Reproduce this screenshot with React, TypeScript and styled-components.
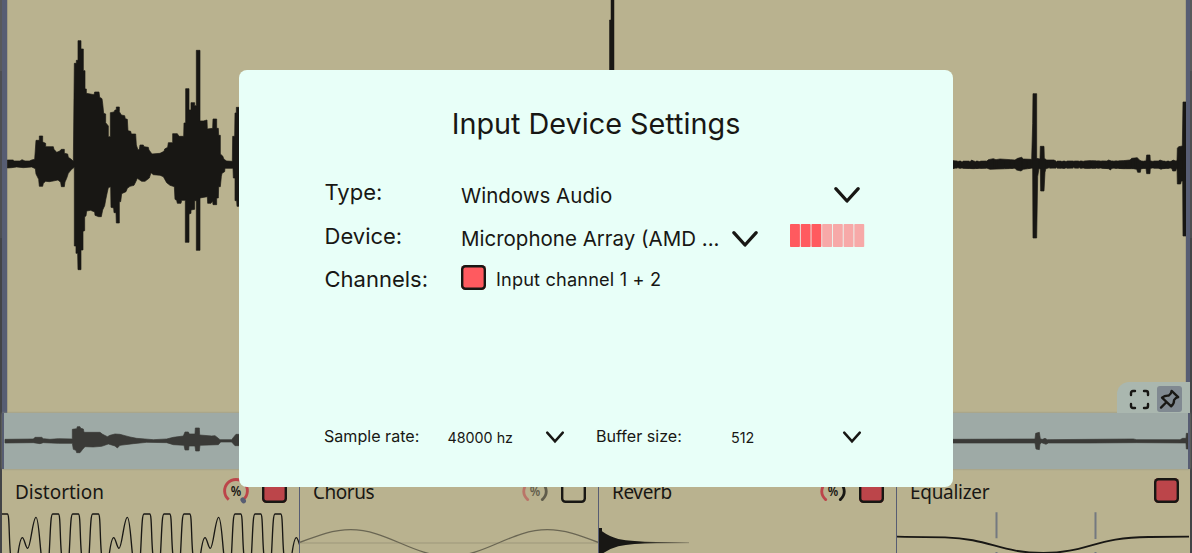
import React from 'react';
import styled, { createGlobalStyle } from 'styled-components';

const ink = '#181714';
const sand = '#b9b28f';
const steel = '#575d73';
const brick = '#bc454a';

const GlobalStyle = createGlobalStyle`
  *, *::before, *::after { box-sizing: border-box; }
  html, body { margin: 0; padding: 0; overflow: hidden; }
  body { background: #48484b; font-family: Inter, "Liberation Sans", sans-serif; color: ${ink}; }
  svg { display: block; flex: none; }
`;

const Workspace = styled.div`
  position: relative;
  display: flex;
  flex-direction: column;
  width: 1192px;
  height: 553px;
  padding: 0 2px;
  overflow: hidden;
  background: linear-gradient(#58595b 0 71px, #4d4e51 71px 238px, #434447 238px);
`;

const Editor = styled.section`
  flex: none;
  height: 413px;
  border-left: 5px solid ${steel};
  border-right: 4px solid ${steel};
  background: ${sand};
  box-shadow: inset 1px 0 0 #a19c84, inset -1px 0 0 #a8a287;
`;

const Overview = styled.section`
  flex: none;
  height: 56px;
  border-left: 2px solid ${steel};
  border-right: 2px solid ${steel};
  background: #9eaaa6;
  box-shadow: 0 0 2px #8c8f80;
  z-index: 1;
`;

const EffectRack = styled.section`
  display: grid;
  grid-template-columns: 298px 299px 298px 293px;
  height: 84px;
  background: ${sand};
`;

const EffectPanel = styled.article<{ $last?: boolean }>`
  display: flex;
  flex-direction: column;
  overflow: hidden;
  border-right: ${p => (p.$last ? '0' : `1px solid ${steel}`)};
`;

const EffectHeader = styled.header<{ $last?: boolean }>`
  display: flex;
  align-items: center;
  flex: none;
  height: 43px;
  padding: 0 ${p => (p.$last ? 11 : 12.5)}px 0 12.5px;
`;

const EffectName = styled.h2<{ $tracking: number }>`
  flex: 1;
  margin: 0;
  font: 400 20.5px/26px "Noto Sans", sans-serif;
  letter-spacing: ${p => p.$tracking}px;
  color: ${ink};
  transform: scaleX(0.925);
  transform-origin: left center;
`;

const Toggle = styled.span<{ $fill: string }>`
  flex: none;
  width: 25px;
  height: 25px;
  border-radius: 4.5px;
  background: ${p => p.$fill};
  box-shadow: inset 0 0 0 2.4px ${ink};
`;

const KnobSlot = styled.span<{ $dim?: boolean }>`
  margin-right: 11.5px;
  opacity: ${p => (p.$dim ? 0.55 : 1)};
`;

const ViewTools = styled.nav`
  position: absolute;
  top: 382px;
  right: 2px;
  display: flex;
  align-items: center;
  gap: 6px;
  width: 73px;
  height: 31px;
  padding: 3px 8px 0 11px;
  border-radius: 12px 0 0 0;
  background: #aab7af;
  z-index: 2;
`;

const ToolButton = styled.button<{ $active?: boolean }>`
  display: grid;
  place-items: center;
  width: ${p => (p.$active ? 25 : 23)}px;
  height: 26px;
  padding: 0;
  border: 0;
  border-radius: 3px;
  background: ${p => (p.$active ? '#808991' : 'transparent')};
`;

const Dialog = styled.div`
  position: absolute;
  top: 70px;
  left: 239px;
  display: flex;
  flex-direction: column;
  width: 714px;
  height: 417px;
  padding: 35px 85px 0;
  border-radius: 8px;
  background: #e8fff8;
  z-index: 3;
`;

const Title = styled.h1`
  margin: 0 0 31px;
  font-size: 28.8px;
  font-weight: 380;
  line-height: 37px;
  text-align: center;
  white-space: nowrap;
`;

const SettingRow = styled.div`
  display: flex;
  align-items: flex-start;
  height: 43.5px;
`;

const Label = styled.span`
  width: 137px;
  flex: none;
  padding-left: 0.5px;
  font-size: 22px;
  font-weight: 380;
  line-height: 38.6px;
`;

const Select = styled.div<{ $width: number }>`
  display: flex;
  align-items: center;
  justify-content: space-between;
  flex: none;
  width: ${p => p.$width}px;
  height: 44px;
  font-size: 20.5px;
  white-space: nowrap;
`;

const Channel = styled.div`
  display: flex;
  align-items: center;
  gap: 10px;
  height: 38px;
  font-size: 18.2px;
  letter-spacing: 0.15px;
`;

const ChannelToggle = styled(Toggle)`
  margin-top: -3px;
`;

const MeterSlot = styled.div`
  margin: 7.5px 0 0 31px;
`;

const Footer = styled.div`
  display: flex;
  align-items: center;
  margin-top: 117px;
  height: 30px;
`;

const FooterLabel = styled.span<{ $width: number }>`
  width: ${p => p.$width}px;
  font-size: 16.1px;
  white-space: nowrap;
`;

const FooterSelect = styled.div<{ $width: number; $gap: number }>`
  display: flex;
  align-items: center;
  justify-content: space-between;
  width: ${p => p.$width}px;
  margin-right: ${p => p.$gap}px;
  padding-top: 3px;
  font-size: 14.3px;
`;

const Chevron = ({ small }: { small?: boolean }) =>
  small ? (
    <svg width="20" height="14" viewBox="0 0 20 14">
      <path d="M2.200 2.700 10 11.300 17.800 2.700" fill="none" stroke={ink} strokeWidth="2.5" strokeLinecap="round" />
    </svg>
  ) : (
    <svg width="28" height="18" viewBox="0 0 28 18">
      <path d="M2.800 2.700 14 15 25.200 2.700" fill="none" stroke={ink} strokeWidth="3.3" strokeLinecap="round" strokeLinejoin="round" />
    </svg>
  );

const LevelMeter = ({ level }: { level: number }) => (
  <MeterSlot>
    <svg width="75" height="23" viewBox="0 0 75 23">
      {Array.from({ length: 7 }, (_, i) => (
        <rect key={i} x={i * 10.72} width="9.9" height="23" rx="0.8" fill={i < level ? '#ff5a5f' : '#f7a9a8'} />
      ))}
    </svg>
  </MeterSlot>
);

const MixKnob = ({ full, dim }: { full?: boolean; dim?: boolean }) => (
  <KnobSlot $dim={dim}>
    <svg width="28" height="28" viewBox="0 0 28 28">
      {full ? (
        <path d="M6.700 22.600A11.400 11.400 0 1 1 21.300 22.600" fill="none" stroke={brick} strokeWidth="2.9" />
      ) : (
        <>
          <path d="M6.700 22.600A11.400 11.400 0 0 1 14 2.700" fill="none" stroke={brick} strokeWidth="2.8" strokeLinecap="round" />
          <path d="M14 2.700A11.400 11.400 0 0 1 21.300 22.600" fill="none" stroke={ink} strokeWidth="2.8" strokeLinecap="round" />
        </>
      )}
      {full && <ellipse cx="21.2" cy="23.4" rx="3.2" ry="2.4" transform="rotate(50 21.2 23.4)" fill={steel} />}
      <text x="14" y="19.400" textAnchor="middle" fontFamily="Noto Sans, sans-serif" fontWeight="600" fontSize="15" textLength="10.500" lengthAdjust="spacingAndGlyphs" fill={ink}>%</text>
    </svg>
  </KnobSlot>
);

const EditorWave = () => (
  <svg width="1179" height="413" viewBox="7 0 1179 413" fill={ink} stroke={ink}>
    <g transform="translate(0 20) scale(.33333)" strokeWidth="2">
      <path d="M22 420 40 420 40 423 60 423 66 419 75 423 88 423 95 420 104 418 108 361 118 361 118 348 128 348 128 366 137 370 137 380 160 380 162 388 170 397 178 394 184 388 193 388 193 400 203 402 205 412 214 418 220 424 223 130 229 130 229 121 234 121 234 62 243 62 243 87 250 87 250 152 255 152 255 207 259 207 259 220 282 224 284 216 297 216 299 232 306 236 308 250 311 280 317 282 317 308 325 318 325 350 331 350 331 278 342 276 345 270 349 270 349 261 358 261 358 275 364 285 374 287 376 296 382 298 384 332 392 334 394 342 407 342 409 375 414 390 418 388 420 375 430 375 432 380 445 382 447 390 456 402 480 400 492 394 494 387 503 382 505 368 518 368 518 341 532 341 537 349 551 349 552 309 557 309 557 206 567 206 567 270 573 270 573 248 584 248 584 257 589 257 589 91 600 91 600 303 610 303 621 300 622 327 638 325 639 297 650 297 650 325 655 325 656 346 661 346 661 402 668 408 672 418 680 423 697 424 698 349 704 349 705 279 709 279 709 262 720 262 720 559 711 559 710 542 705 542 705 474 700 474 699 445 675 445 674 455 666 460 664 470 661 500 656 500 655 534 650 534 650 554 639 554 638 543 633 550 623 550 622 530 600 534 600 691 589 691 589 542 584 542 584 568 573 570 573 580 567 582 567 667 556 667 556 541 545 541 543 550 532 550 530 541 525 538 523 500 510 496 500 488 490 470 480 466 460 464 453 458 448 474 435 484 425 484 412 475 408 484 402 496 390 499 382 505 378 515 365 521 362 545 358 545 358 609 349 609 348 578 342 578 341 564 333 562 332 500 325 503 322 516 317 540 314 557 308 570 304 590 296 590 285 586 284 576 272 571 260 573 258 588 254 590 254 632 249 634 249 690 243 690 243 749 234 749 233 700 228 700 228 678 223 678 223 442 215 448 205 460 200 475 195 486 193 500 184 500 182 487 174 480 155 484 148 485 137 484 130 490 128 499 118 499 116 478 108 462 106 446 95 441 70 443 50 441 35 443 22 444Z" />
    </g>
    <path d="M611 -2H614V164H609.500V20H611Z" strokeWidth="0.5" />
    <g transform="translate(940 80) scale(.33333)" strokeWidth="2">
      <path d="M39 242 60 245 92 245 95 240 103 245 140 244 145 239 160 236 168 239 180 237 212 239 225 240 233 235 245 232 250 237 275 238 278 130 279 41 290 41 290 235 300 237 301 199 312 199 313 235 320 240 342 240 350 245 385 244 430 244 450 242 500 244 506 240 515 244 550 242 570 240 575 235 592 233 598 240 605 244 618 244 620 225 630 225 631 244 655 244 660 240 672 245 695 244 699 240 706 243 711 243 712 205 716 200 727 198 729 66 738 66 738 468 729 468 728 303 724 303 722 312 712 312 711 262 707 273 698 273 695 264 668 266 663 268 655 264 631 264 630 281 620 281 618 265 603 266 601 277 593 277 590 268 580 266 550 266 515 264 512 270 505 266 480 264 440 265 400 262 370 265 340 262 318 265 315 277 312 333 302 333 301 268 297 265 293 290 290 474 279 474 278 264 250 268 243 273 230 270 225 265 150 268 140 264 100 266 60 264 48 262 39 266Z" />
      <path d="M39 254H730" strokeWidth="23" strokeDasharray="13 4 7 6 19 3" />
    </g>
  </svg>
);

const OverviewWave = () => (
  <svg width="1184" height="56" viewBox="4 413 1184 56" fill="#3a3a37" stroke="#3a3a37" strokeWidth="2">
    <g transform="translate(0 400) scale(.33333)">
      <path d="M15 118 100 117 105 112 125 112 130 116 150 118 175 116 217 117 217 88 230 86 232 80 240 80 242 85 250 87 252 97 300 97 308 103 322 110 330 106 345 102 360 103 375 107 390 111 410 115 460 119 500 117 520 112 550 108 555 96 565 96 568 102 585 102 586 84 598 84 599 105 635 108 645 107 655 115 660 119 695 119 702 110 708 103 720 103 720 137 705 137 695 126 662 126 655 134 600 136 598 153 587 153 585 138 567 138 566 150 555 150 552 136 520 134 500 128 440 127 400 131 360 136 352 144 345 138 325 132 305 139 280 141 255 140 248 148 240 158 230 158 228 151 220 148 217 130 175 130 130 128 120 131 100 128 15 129Z" />
    </g>
    <g transform="translate(890 370) scale(.33333)">
      <path d="M180 208 435 207 437 190 448 187 451 207 458 208 465 205 472 209 600 208 730 207 740 209 870 209 878 205 888 205 889 190 894 190 894 237 889 237 888 219 740 218 600 219 475 219 468 223 455 218 450 222 448 239 438 237 435 219 180 219Z" />
    </g>
  </svg>
);

const flats = [-47, 14, 167, 227, 287, 441, 501, 561, 714, 774, 834];
const cycles = [0, 274, 548, 822];

const DistortionCurve = () => (
  <svg width="297" height="41" viewBox="6 336 891 123" fill="none" stroke={ink} strokeWidth="4">
    {flats.map(c => (
      <path key={c} transform={`translate(${c} 0)`} d="M-20 470C-16 410-16 342-9 342H8C15 342 12 410 18 470" />
    ))}
    {cycles.map(c => (
      <path key={c} transform={`translate(${c} 0)`} d="M53 468C58 430 62 413 67 413C73 413 77 445 83 445C92 445 98 352 108 352C116 352 119 430 124 468" />
    ))}
  </svg>
);

const ChorusCurve = () => (
  <svg width="298" height="41" viewBox="30 126 894 123" fill="none">
    <path d="M30 219H924" stroke="#9d977a" strokeWidth="3" />
    <path d="M30 217C85 196 130 179 182 179C290 179 370 259 478 259C586 259 664 179 772 179C824 179 870 196 924 217" stroke="#6a6653" strokeWidth="4" />
  </svg>
);

const ReverbCurve = () => (
  <svg width="297" height="41" viewBox="27 126 891 123">
    <defs>
      <linearGradient id="tail" gradientUnits="userSpaceOnUse" x1="27" y1="0" x2="300" y2="0">
        <stop offset="0.45" stopColor={ink} />
        <stop offset="1" stopColor={ink} stopOpacity="0.2" />
      </linearGradient>
    </defs>
    <path d="M27 174H36V184Q58 200 85 207Q125 215 200 216H297V220H200Q125 220 85 229Q58 236 36 252H27Z" fill="url(#tail)" />
  </svg>
);

const EqualizerCurve = () => (
  <svg width="293" height="41" viewBox="21 426 879 123" fill="none">
    <path d="M319.500 427V505M616.500 427V507M319.500 546V552M616.500 546V552" stroke="#747980" strokeWidth="6" />
    <path d="M21 500C70 501 120 501 165 502C300 506 330 549 460 549C590 549 620 500 780 501L897 500" stroke={ink} strokeWidth="5.5" />
  </svg>
);

export default function App() {
  return (
    <>
      <GlobalStyle />
      <Workspace>
        <Editor><EditorWave /></Editor>
        <Overview><OverviewWave /></Overview>
        <EffectRack>
          <EffectPanel>
            <EffectHeader>
              <EffectName $tracking={0}>Distortion</EffectName>
              <MixKnob full />
              <Toggle $fill={brick} />
            </EffectHeader>
            <DistortionCurve />
          </EffectPanel>
          <EffectPanel>
            <EffectHeader>
              <EffectName $tracking={-0.5}>Chorus</EffectName>
              <MixKnob dim />
              <Toggle $fill="transparent" />
            </EffectHeader>
            <ChorusCurve />
          </EffectPanel>
          <EffectPanel>
            <EffectHeader>
              <EffectName $tracking={-0.4}>Reverb</EffectName>
              <MixKnob />
              <Toggle $fill={brick} />
            </EffectHeader>
            <ReverbCurve />
          </EffectPanel>
          <EffectPanel $last>
            <EffectHeader $last>
              <EffectName $tracking={-0.3}>Equalizer</EffectName>
              <Toggle $fill={brick} />
            </EffectHeader>
            <EqualizerCurve />
          </EffectPanel>
        </EffectRack>

        <ViewTools>
          <ToolButton aria-label="Fit to view">
            <svg width="21" height="21" viewBox="0 0 21 21" fill="none" stroke={ink} strokeWidth="2.4" strokeLinecap="round">
              <path d="M2 6V4Q2 2 4 2H6M15 2H17Q19 2 19 4V6M19 15V17Q19 19 17 19H15M6 19H4Q2 19 2 17V15" />
            </svg>
          </ToolButton>
          <ToolButton $active aria-label="Pin">
            <svg width="21" height="21" viewBox="0 0 21 21" fill="none" stroke={ink} strokeWidth="2.3" strokeLinecap="round" strokeLinejoin="round">
              <path d="M12.600 1.800 19.200 8.200Q16.800 8.600 15 11.200Q15.400 14.600 12.200 17.400L3 8.700Q6 6.200 9.700 6.600Q12.400 4.600 12.600 1.800ZM7.300 13.200 2 18.600" />
            </svg>
          </ToolButton>
        </ViewTools>

        <Dialog role="dialog">
          <Title>Input Device Settings</Title>
          <SettingRow>
            <Label>Type:</Label>
            <Select $width={400}>Windows Audio<Chevron /></Select>
          </SettingRow>
          <SettingRow>
            <Label>Device:</Label>
            <Select $width={298}>Microphone Array (AMD ...<Chevron /></Select>
            <LevelMeter level={3} />
          </SettingRow>
          <SettingRow>
            <Label>Channels:</Label>
            <Channel><ChannelToggle $fill="#ff5a5f" />Input channel 1 + 2</Channel>
          </SettingRow>
          <Footer>
            <FooterLabel $width={123.5}>Sample rate:</FooterLabel>
            <FooterSelect $width={117.5} $gap={31}>48000 hz<Chevron small /></FooterSelect>
            <FooterLabel $width={135}>Buffer size:</FooterLabel>
            <FooterSelect $width={131} $gap={0}>512<Chevron small /></FooterSelect>
          </Footer>
        </Dialog>
      </Workspace>
    </>
  );
}
